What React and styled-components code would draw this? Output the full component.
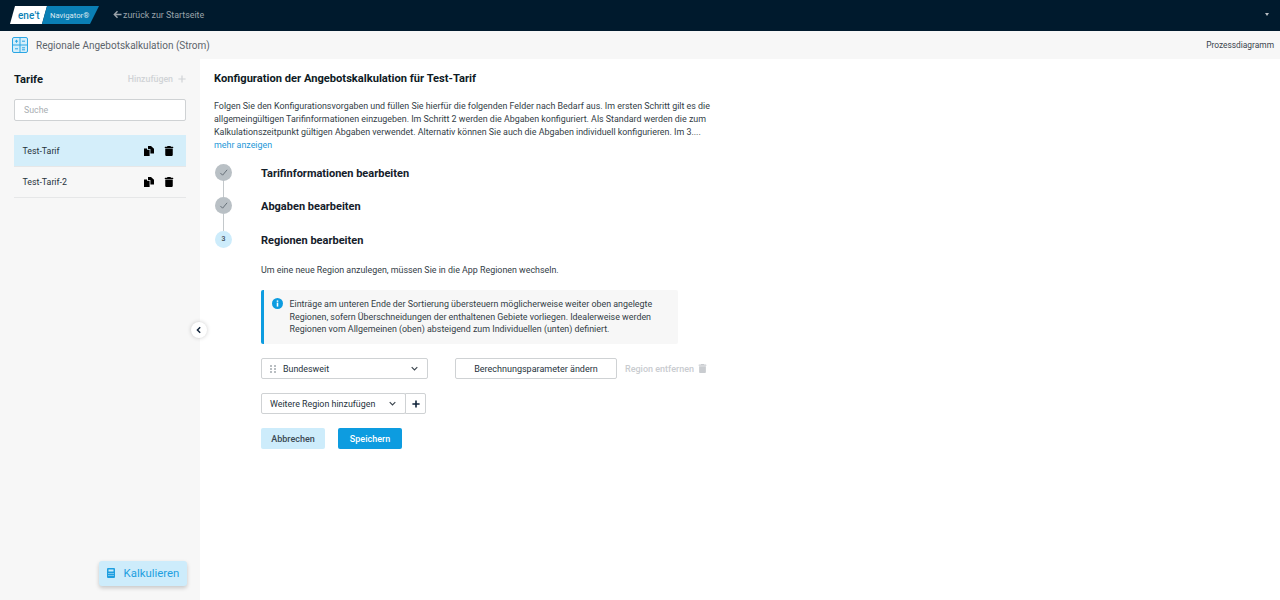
import React from "react"
import styled, { createGlobalStyle } from "styled-components"

const GlobalStyle = createGlobalStyle`
  html, body {
    margin: 0;
    padding: 0;
    height: 100%;
    overflow: hidden;
    background: #fff;
    font-family: Roboto, "Liberation Sans", sans-serif;
    color: #1a2530;
  }
  * {
    box-sizing: border-box;
  }
`

const Page = styled.div`
  width: 1280px;
  height: 600px;
  display: flex;
  flex-direction: column;
`

const TopBar = styled.header`
  height: 31px;
  flex: none;
  background: #001a2d;
  display: flex;
  align-items: center;
  padding: 0 11px 2px 10px;
`

const Logo = styled.svg`
  flex: none;
  margin-right: 14px;
`

const BackLink = styled.a`
  display: flex;
  align-items: center;
  gap: 1px;
  font-size: 8.9px;
  color: #9aa3aa;
`

const TopCaret = styled.span`
  margin-left: auto;
  width: 0;
  height: 0;
  border-left: 2.5px solid transparent;
  border-right: 2.5px solid transparent;
  border-top: 3px solid #b8bec3;
`

const SubBar = styled.div`
  height: 28px;
  flex: none;
  background: #f7f7f7;
  display: flex;
  align-items: center;
  padding: 0 6px 0 12px;
  font-size: 10px;
  color: #5c646b;
`

const SubTitle = styled.span`
  margin-left: 8px;
`

const ProcessLink = styled.a`
  margin-left: auto;
  font-size: 8.4px;
  color: #3a444d;
`

const Body = styled.div`
  flex: 1;
  display: flex;
  min-height: 0;
`

const Sidebar = styled.aside`
  position: relative;
  width: 200px;
  flex: none;
  background: #f7f7f7;
  padding: 0 14px 14px;
  display: flex;
  flex-direction: column;
`

const SideHead = styled.div`
  height: 40px;
  display: flex;
  align-items: center;
  justify-content: space-between;
`

const SideTitle = styled.h2`
  margin: 0;
  font-size: 11.15px;
  font-weight: 700;
  color: #0e1a24;
`

const AddLink = styled.span`
  display: flex;
  align-items: center;
  gap: 5px;
  font-size: 8.8px;
  font-weight: 500;
  color: #d0d3d6;
`

const SearchBox = styled.input`
  height: 22px;
  width: 100%;
  margin: 0 0 14px;
  border: 1px solid #cfd2d4;
  border-radius: 2px;
  background: #fff;
  padding: 0 9px;
  font: 400 8.8px Roboto, sans-serif;
  outline: none;

  &::placeholder {
    color: #a9aeb2;
    opacity: 1;
  }
`

const TariffRow = styled.div`
  height: 31.5px;
  display: flex;
  align-items: center;
  padding: 1px 12.5px 0 8.5px;
  gap: 9.5px;
  font-size: 8.8px;
  color: #26323c;
  background: ${(props) => (props.$active ? "#d4eefa" : "transparent")};
  border-bottom: 1px solid #e6e7e8;
`

const TariffName = styled.span`
  flex: 1;
`

const CalcButton = styled.button`
  margin-top: auto;
  margin-left: auto;
  margin-right: -1px;
  width: 88px;
  height: 25px;
  padding: 0 0 2px;
  border: 0;
  border-radius: 3px;
  background: #cdecfb;
  box-shadow: 0 2px 4px rgba(0, 0, 0, 0.2);
  color: #1e9fe0;
  display: flex;
  align-items: center;
  justify-content: center;
  gap: 9px;
  font: 400 11.4px Roboto, sans-serif;
`

const Collapse = styled.button`
  position: absolute;
  right: -7px;
  top: 263px;
  width: 16px;
  height: 16px;
  padding: 0;
  border: 0;
  border-radius: 50%;
  background: #fff;
  box-shadow: 0 0 4px rgba(0, 0, 0, 0.2);
  display: flex;
  align-items: center;
  justify-content: center;
`

const Main = styled.main`
  flex: 1;
  padding: 12px 0 0 14px;
`

const Heading = styled.h1`
  margin: 0 0 13px;
  font-size: 11.15px;
  line-height: 16px;
  font-weight: 700;
  color: #0e1a24;
`

const Intro = styled.p`
  margin: 0;
  width: 500px;
  font-size: 8.9px;
  line-height: 13px;
  color: #333d46;
`

const MoreLink = styled.a`
  display: block;
  font-size: 8.9px;
  line-height: 13px;
  color: #1e98d8;
  margin-bottom: 12px;
`

const Step = styled.div`
  display: flex;
  align-items: center;
  height: 16px;
`

const StepConnector = styled.div`
  width: 1px;
  height: 17.5px;
  margin-left: 9px;
  background: #c3c8cb;
`

const StepCircle = styled.span`
  width: 17px;
  height: 17px;
  flex: none;
  border-radius: 50%;
  margin: 0 29px 0 1px;
  display: flex;
  align-items: center;
  justify-content: center;
  font-size: 7px;
  font-weight: 500;
  color: #3c4a55;
  background: ${(props) => (props.$done ? "#b9c0c5" : "#cdecfb")};
`

const StepTitle = styled.h3`
  margin: 2px 0 0;
  font-size: 11px;
  font-weight: 700;
  color: #14202a;
`

const StepBody = styled.div`
  margin-left: 47px;
  padding-top: 17px;
`

const Hint = styled.p`
  margin: 0 0 13px;
  font-size: 8.9px;
  line-height: 13px;
  color: #333d46;
`

const InfoBox = styled.div`
  width: 417px;
  height: 54px;
  margin-bottom: 14px;
  padding: 8px 10px 0 8px;
  display: flex;
  gap: 6.5px;
  background: #f7f7f7;
  border-left: 3px solid #0d9ce0;
  border-radius: 2px;
  font-size: 8.9px;
  line-height: 12.5px;
  color: #333d46;
`

const InfoIcon = styled.svg`
  flex: none;
`

const RegionRow = styled.div`
  display: flex;
  align-items: center;
  height: 21px;
  margin-bottom: 14px;
`

const SelectBox = styled.div`
  width: ${(props) => props.$width}px;
  height: 21px;
  flex: none;
  display: flex;
  align-items: center;
  gap: 7px;
  padding: 0 9px 0 8px;
  background: #fff;
  border: 1px solid #cfd2d4;
  border-radius: 2px;
  font-size: 8.9px;
  color: #26323c;
`

const SelectText = styled.span`
  flex: 1;
`

const OutlineButton = styled.button`
  width: 162px;
  height: 21px;
  margin-left: 27px;
  padding: 0;
  background: #fff;
  border: 1px solid #cfd2d4;
  border-radius: 2px;
  font: 400 9px Roboto, sans-serif;
  color: #26323c;
`

const RemoveLink = styled.span`
  margin-left: 8px;
  display: flex;
  align-items: center;
  gap: 4px;
  font-size: 9px;
  font-weight: 500;
  color: #c9ccd0;
`

const SquareButton = styled.button`
  width: 21px;
  height: 21px;
  margin-left: -1px;
  padding: 0;
  background: #fff;
  border: 1px solid #cfd2d4;
  border-radius: 0 2px 2px 0;
  display: flex;
  align-items: center;
  justify-content: center;
`

const Actions = styled.div`
  display: flex;
  gap: 13px;
`

const ActionButton = styled.button`
  width: 64px;
  height: 21px;
  padding: 0;
  border: 0;
  border-radius: 2px;
  font: 500 9px Roboto, sans-serif;
  color: ${(props) => (props.$primary ? "#fff" : "#3b4a55")};
  background: ${(props) => (props.$primary ? "#0d9ce0" : "#cdecfb")};
`

const Trash = ({ color = "#000", size = 10 }) => (
  <svg width={size} height={size} viewBox="0 0 448 512" fill={color}>
    <path d="M135 17.7C140.400 6.800 151.500 0 163.600 0h120.800c12.100 0 23.200 6.800 28.600 17.700L320 32h96c17.700 0 32 14.300 32 32s-14.300 32-32 32H32C14.300 96 0 81.700 0 64s14.300-32 32-32h96l7-14.300zM32 128h384v320c0 35.300-28.700 64-64 64H96c-35.300 0-64-28.700-64-64V128z" />
  </svg>
)

const Copy = () => (
  <svg width="10" height="10" viewBox="0 0 10 10" fill="#000">
    <path d="M0 2.500h3v1.200h2.600V10H0z" />
    <path d="M4 0h3l3 2.800V7.500H6.400V3H4z" />
  </svg>
)

const Chevron = () => (
  <svg width="7" height="7" viewBox="0 0 10 10" fill="none" stroke="#3a444d" strokeWidth="1.600">
    <path d="M1 3 5 7l4-4" />
  </svg>
)

const Check = () => (
  <svg width="9" height="9" viewBox="0 0 10 10" fill="none" stroke="#5d6870" strokeWidth="1">
    <path d="M1.500 5.500 4 8l5-6" />
  </svg>
)

const Grip = () => (
  <svg width="6" height="8" viewBox="0 0 6 8" fill="#b9bec2">
    {[0, 3, 6].map((y) => (
      <React.Fragment key={y}>
        <rect x="0" y={y} width="2" height="2" />
        <rect x="4" y={y} width="2" height="2" />
      </React.Fragment>
    ))}
  </svg>
)

const Plus = ({ color, size, weight = 1.5 }) => (
  <svg width={size} height={size} viewBox="0 0 10 10" fill="none" stroke={color} strokeWidth={weight}>
    <path d="M5 .5v9M.5 5h9" />
  </svg>
)

const tariffs = [
  { name: "Test-Tarif", active: true },
  { name: "Test-Tarif-2" },
]

export default function App() {
  return (
    <>
      <GlobalStyle />
      <Page>
        <TopBar>
          <Logo width="89" height="18" viewBox="0 0 89 18">
            <path d="M5 0h32l-5 18H0z" fill="#fff" />
            <path d="M37 0h52l-9 18H32z" fill="#0a7fb5" />
            <text x="8" y="12.500" fontFamily="Roboto, sans-serif" fontSize="10" fontWeight="500" fill="#0a7fb5">ene</text>
            <text x="24.500" y="12.500" fontFamily="Roboto, sans-serif" fontSize="10" fontWeight="500" fill="#0a7fb5">'t</text>
            <text x="40" y="12" fontFamily="Roboto, sans-serif" fontSize="7.700" fill="#dbe9f1">Navigator®</text>
          </Logo>
          <BackLink>
            <svg width="9" height="9" viewBox="0 0 10 10" fill="none" stroke="#9aa3aa" strokeWidth="1.600">
              <path d="M9.500 5H1.500M5 1.500 1.500 5 5 8.500" />
            </svg>
            zurück zur Startseite
          </BackLink>
          <TopCaret />
        </TopBar>

        <SubBar>
          <svg width="16" height="16" viewBox="0 0 16 16" fill="#d4eefa" stroke="#2ba6e4" strokeWidth="1">
            <rect x=".5" y=".5" width="15" height="15" rx="1.500" />
            <path d="M8 .5v15M.5 8h15" fill="none" />
            <path d="M3 4.200h3M4.500 2.800v3M10 4.200h3M3 11.800h3M10 10.800h3M10 12.800h3" fill="none" />
          </svg>
          <SubTitle>Regionale Angebotskalkulation (Strom)</SubTitle>
          <ProcessLink>Prozessdiagramm</ProcessLink>
        </SubBar>

        <Body>
          <Sidebar>
            <SideHead>
              <SideTitle>Tarife</SideTitle>
              <AddLink>
                Hinzufügen
                <Plus color="#d0d3d6" size={8} />
              </AddLink>
            </SideHead>
            <SearchBox placeholder="Suche" />
            {tariffs.map((tariff) => (
              <TariffRow key={tariff.name} $active={tariff.active}>
                <TariffName>{tariff.name}</TariffName>
                <Copy />
                <Trash />
              </TariffRow>
            ))}
            <CalcButton>
              <svg width="8" height="10" viewBox="0 0 8 10" fill="#1e9fe0">
                <path d="M1 0h6a1 1 0 0 1 1 1v8a1 1 0 0 1-1 1H1a1 1 0 0 1-1-1V1a1 1 0 0 1 1-1zm.5 1.500v2h5v-2zM1.500 5v1h1V5zm2 0v1h1V5zm2 0v1h1V5zm-4 2v1h1V7zm2 0v1h1V7zm2 0v1h1V7z" fillRule="evenodd" />
              </svg>
              Kalkulieren
            </CalcButton>
            <Collapse>
              <svg width="8" height="8" viewBox="0 0 10 10" fill="none" stroke="#10233a" strokeWidth="1.800">
                <path d="M6.500 1.500 3 5l3.500 3.500" />
              </svg>
            </Collapse>
          </Sidebar>

          <Main>
            <Heading>Konfiguration der Angebotskalkulation für Test-Tarif</Heading>
            <Intro>
              Folgen Sie den Konfigurationsvorgaben und füllen Sie hierfür die folgenden Felder nach Bedarf aus. Im ersten Schritt gilt es die allgemeingültigen Tarifinformationen einzugeben. Im Schritt 2 werden die Abgaben konfiguriert. Als Standard werden die zum Kalkulationszeitpunkt gültigen Abgaben verwendet. Alternativ können Sie auch die Abgaben individuell konfigurieren. Im 3....
            </Intro>
            <MoreLink>mehr anzeigen</MoreLink>

            <Step>
              <StepCircle $done><Check /></StepCircle>
              <StepTitle>Tarifinformationen bearbeiten</StepTitle>
            </Step>
            <StepConnector />
            <Step>
              <StepCircle $done><Check /></StepCircle>
              <StepTitle>Abgaben bearbeiten</StepTitle>
            </Step>
            <StepConnector />
            <Step>
              <StepCircle>3</StepCircle>
              <StepTitle>Regionen bearbeiten</StepTitle>
            </Step>

            <StepBody>
              <Hint>Um eine neue Region anzulegen, müssen Sie in die App Regionen wechseln.</Hint>
              <InfoBox>
                <InfoIcon width="11" height="11" viewBox="0 0 10 10">
                  <circle cx="5" cy="5" r="5" fill="#0d9ce0" />
                  <rect x="4.300" y="4.200" width="1.400" height="3.600" fill="#fff" />
                  <rect x="4.300" y="2.200" width="1.400" height="1.300" fill="#fff" />
                </InfoIcon>
                <span>
                  Einträge am unteren Ende der Sortierung übersteuern möglicherweise weiter oben angelegte Regionen, sofern Überschneidungen der enthaltenen Gebiete vorliegen. Idealerweise werden Regionen vom Allgemeinen (oben) absteigend zum Individuellen (unten) definiert.
                </span>
              </InfoBox>

              <RegionRow>
                <SelectBox $width={167}>
                  <Grip />
                  <SelectText>Bundesweit</SelectText>
                  <Chevron />
                </SelectBox>
                <OutlineButton>Berechnungsparameter ändern</OutlineButton>
                <RemoveLink>
                  Region entfernen
                  <Trash color="#c9ccd0" size={9} />
                </RemoveLink>
              </RegionRow>

              <RegionRow>
                <SelectBox $width={145}>
                  <SelectText>Weitere Region hinzufügen</SelectText>
                  <Chevron />
                </SelectBox>
                <SquareButton>
                  <Plus color="#10233a" size={8} weight={2} />
                </SquareButton>
              </RegionRow>

              <Actions>
                <ActionButton>Abbrechen</ActionButton>
                <ActionButton $primary>Speichern</ActionButton>
              </Actions>
            </StepBody>
          </Main>
        </Body>
      </Page>
    </>
  )
}
